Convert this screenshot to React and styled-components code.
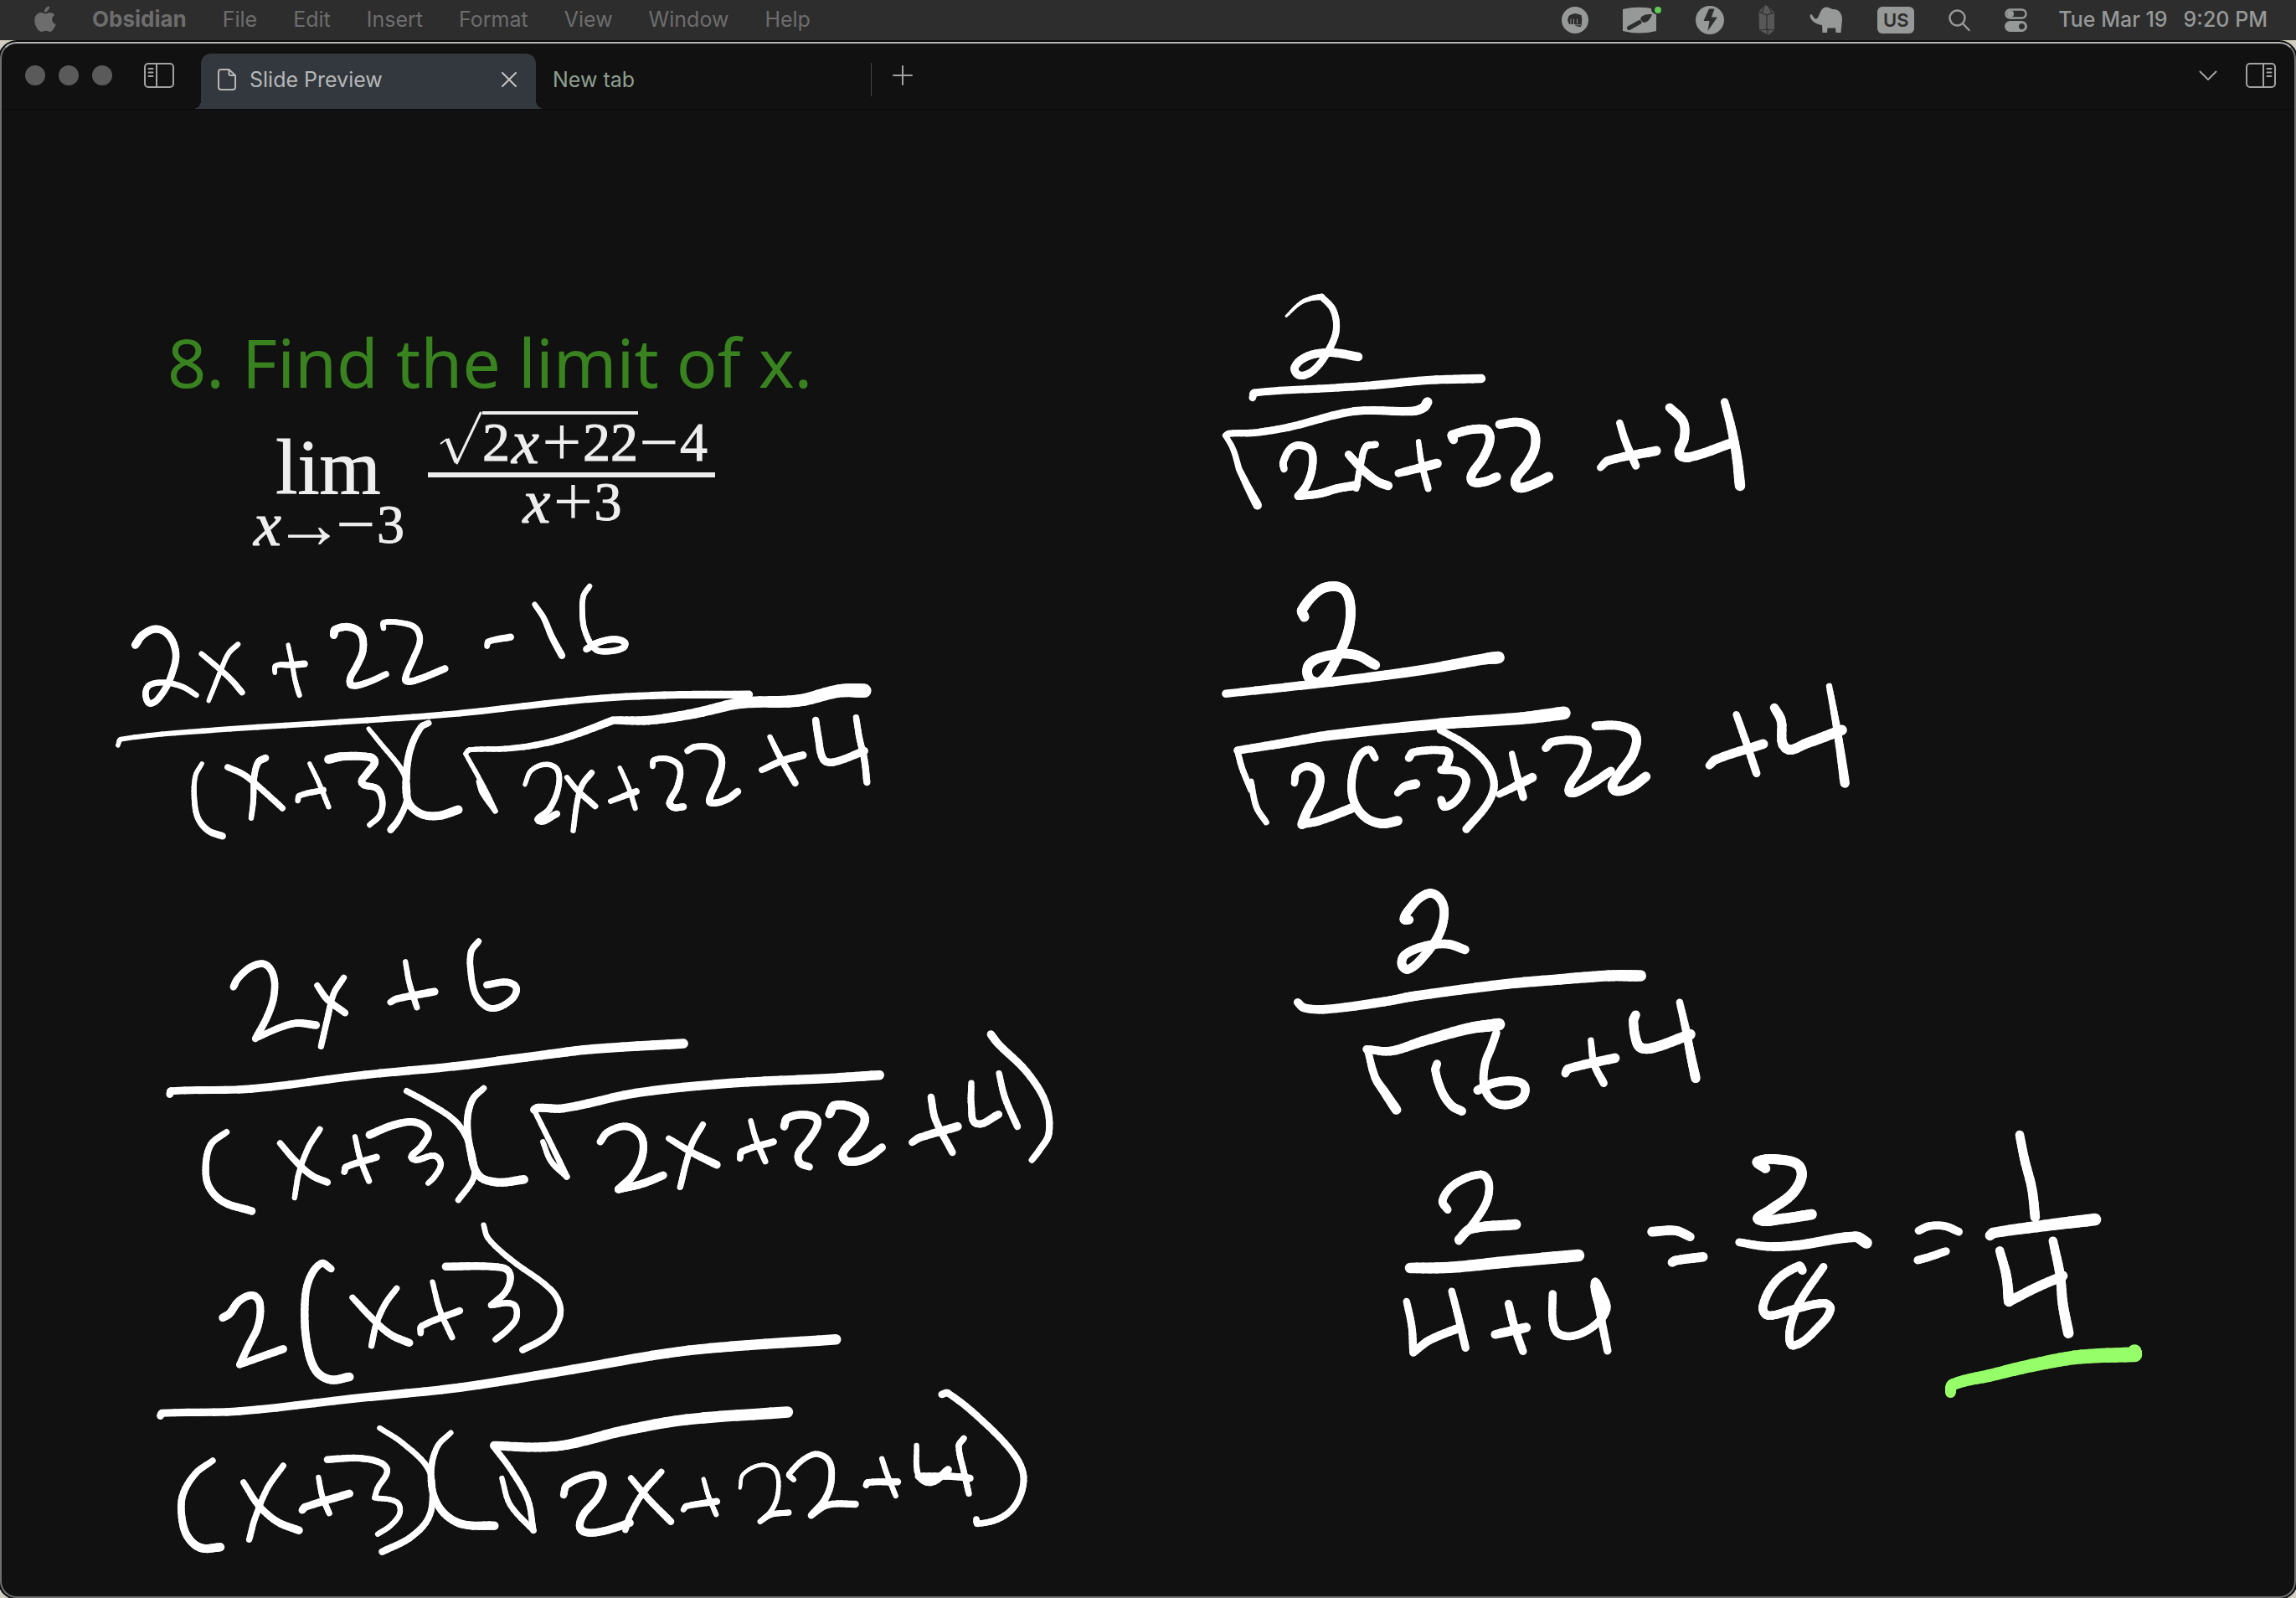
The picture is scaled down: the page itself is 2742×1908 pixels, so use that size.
import React from "react";
import styled, { createGlobalStyle } from "styled-components";

const GlobalStyle = createGlobalStyle`
  * { box-sizing: border-box; }
  body { margin: 0; background: #d2cec2; font-family: Inter, "Liberation Sans", sans-serif; }
  button { font: inherit; color: inherit; background: none; border: 0; padding: 0; margin: 0; }
  svg { display: block; }
`;

const Desktop = styled.div`
  min-height: 100vh;
  display: flex;
  flex-direction: column;
`;

/* ---------- menu bar ---------- */

const MenuBar = styled.header`
  height: 48px;
  flex: none;
  display: flex;
  align-items: center;
  justify-content: space-between;
  padding: 0 34px 0 41px;
  background: #2d2d2d;
  font-size: 25px;
  line-height: 32px;
`;

const Menus = styled.nav`
  display: flex;
  align-items: center;
  gap: 43px;
  color: #6d6d6d;
  padding-bottom: 2px;
`;

const MenuItem = styled.button`
  && {
    font-size: ${(p) => (p.$app ? 26 : 25)}px;
    font-weight: ${(p) => (p.$app ? 700 : 400)};
  }
`;

const Status = styled.div`
  display: flex;
  align-items: center;
  color: #979898;
  gap: 41px;
`;

const StatusItem = styled.button`
  display: flex;
`;

const InputSource = styled.button`
  && {
    width: 44px;
    height: 32px;
    border-radius: 6px;
    background: #979898;
    color: #2d2d2d;
    font-size: 22px;
    line-height: 32px;
    font-weight: 600;
  }
`;

const Clock = styled.time`
  display: flex;
  gap: 19px;
  font-weight: 500;
  padding-bottom: 2px;
  white-space: nowrap;
  margin-left: -4px;
`;

/* ---------- window ---------- */

const Window = styled.main`
  flex: 1;
  display: flex;
  flex-direction: column;
  margin-top: 2px;
  background: #111;
  border: 2px solid #6f7070;
  border-top-color: #b4b4b4;
  border-radius: 20px;
  box-shadow: 0 0 0 2px #0a0a0a;
`;

const TitleBar = styled.div`
  height: 79px;
  flex: none;
  display: flex;
  align-items: stretch;
  border-bottom: 1px solid #0b0b0b;
  padding: 12px 22px 0 28px;
  color: #a2a2a2;
`;

const Lights = styled.div`
  display: flex;
  gap: 16px;
  align-self: flex-start;
  padding-top: 14px;
  margin-right: 38px;
`;

const Light = styled.button`
  && {
    width: 24px;
    height: 24px;
    border-radius: 50%;
    background: #5a5a5a;
  }
`;

const IconButton = styled.button`
  display: flex;
  align-items: center;
  align-self: flex-start;
  height: 52px;
`;

const Tabs = styled.div`
  display: flex;
  margin-left: 32px;
  font-size: 25px;
  line-height: 32px;
`;

const Tab = styled.div`
  position: relative;
  width: 400px;
  display: flex;
  align-items: center;
  padding: 0 23px 4px 20px;
  border-radius: 12px 12px 0 0;
  background: ${(p) => (p.$active ? "#32383e" : "transparent")};
  color: ${(p) => (p.$active ? "#b7b7b7" : "#8f9f91")};

  &::before, &::after {
    content: "";
    display: ${(p) => (p.$active ? "block" : "none")};
    position: absolute;
    bottom: 0;
    width: 10px;
    height: 10px;
  }
  &::before { right: 100%; background: radial-gradient(circle at 0 0, transparent 10px, #32383e 10px); }
  &::after { left: 100%; background: radial-gradient(circle at 100% 0, transparent 10px, #32383e 10px); }
`;

const TabTitle = styled.button`
  flex: 1;
  display: flex;
  align-items: center;
  gap: 16px;
  text-align: left;
`;

const TabDivider = styled.div`
  width: 1px;
  height: 40px;
  margin: 11px 25px 0 0;
  background: #454545;
`;

const Spacer = styled.div`
  flex: 1;
`;

const RightTools = styled.div`
  display: flex;
  gap: 34px;
`;

/* ---------- slide ---------- */

const Slide = styled.section`
  flex: 1;
  position: relative;
  padding: 246px 198px 0;
`;

const Heading = styled.h1`
  margin: 0;
  font-family: "Noto Sans", "Open Sans", sans-serif;
  font-weight: 400;
  font-size: 81px;
  line-height: 110px;
  color: #38831f;
`;

const Formula = styled.div`
  display: flex;
  align-items: flex-start;
  gap: 28px;
  padding-left: 101px;
  color: #eee;
  font-family: "Liberation Serif", serif;
  font-size: 66px;
  line-height: 54px;
  -webkit-text-stroke: 1px #eee;
`;

const Limit = styled.div`
  display: flex;
  flex-direction: column;
  align-items: center;
  gap: 10px;
  padding-top: 38px;
`;

const LimitName = styled.div`
  font-size: 94px;
  line-height: 64px;
`;

const Row = styled.div`
  display: flex;
  justify-content: center;
`;

const Glyph = styled.span`
  width: ${(p) => p.$w}px;
  text-align: center;
  flex: none;
  display: flex;
  justify-content: center;
`;

const Variable = styled(Glyph)`
  font-style: italic;
  font-size: 74px;
`;

const Operator = styled(Glyph)`
  font-size: 84px;
  -webkit-text-stroke: 0;
`;

const Fraction = styled.div`
  padding-top: 4px;
`;

const Numerator = styled.div`
  display: flex;
  align-items: flex-end;
  padding: 0 9px 9px 14px;
  border-bottom: 6px solid #eee;
`;

const Radical = styled.div`
  display: flex;
  align-items: flex-end;
`;

const Radicand = styled(Row)`
  border-top: 4px solid #eee;
  padding-top: 6px;
`;

const Denominator = styled(Row)`
  padding-top: 2px;
`;

const InkLayer = styled.svg`
  position: absolute;
  inset: 0 auto auto 0;
  width: 100%;
  height: auto;
  pointer-events: none;
`;

/* ---------- pen ink ---------- */

/* Each group is one block of handwriting on its own grid; a stroke is
   [start width, end width, "x,y x,y ..."]. */
const INK = [
  {
    x: 120, y: 680, sx: 960 / 1568,
    strokes: [
      [9, 6, "68,270 82,235 108,213 133,235 147,300 140,370 122,440 98,480 88,450 95,415 125,405 160,420 187,450"],
      [6, 7, "197,302 225,345 255,395 276,440"], [6, 5, "268,268 250,300 235,360 222,420 211,470"],
      [5, 8, "340,370 342,345 370,342 398,338"], [5, 6, "366,270 374,340 380,400 388,450"],
      [9, 7, "455,235 458,215 485,206 508,230 512,290 500,345 487,390 490,415 520,405 557,375"],
      [6, 8, "552,210 553,190 590,192 615,210 623,255 610,320 597,375 597,400 625,390 672,355"],
      [6, 8, "754,275 757,258 800,242"],
      [6, 8, "847,125 865,175 880,240 900,308"],
      [6, 8, "954,60 942,95 940,160 945,220 965,285 990,293 1020,280 1022,260 1000,250 970,262 948,285"],
      [5, 9, "34,630 40,608 200,578 520,540 700,515 950,465 1100,450 1265,448"],
      [6, 6, "738,760 745,800 770,865"], [6, 5, "770,865 748,780 712,660"],
      [5, 9, "712,660 720,646 790,642 860,625 920,595 1000,540"],
      [9, 16, "1005,540 1070,540 1160,515 1250,478 1360,470 1440,435 1490,434"],
      [5, 8, "198,695 185,740 183,820 190,890 210,935 238,955"],
      [7, 7, "248,708 280,735 310,780 355,855"], [8, 6, "322,675 308,690 300,740 298,830 294,890"],
      [6, 7, "385,828 388,810 435,790"], [5, 6, "408,695 425,760 445,850"],
      [10, 6, "445,680 470,670 525,672 535,690 520,730 510,765 540,785 550,830 545,880 525,915"],
      [5, 8, "523,570 545,620 585,710 597,760 597,830 580,900 566,932"],
      [7, 10, "640,550 625,565 605,640 597,730 600,830 625,875 660,882 698,860"],
      [5, 8, "828,770 840,720 870,698 892,720 892,790 875,860 855,900 890,875"],
      [6, 7, "910,745 930,790 965,848"], [7, 6, "958,728 940,770 930,830 922,935"],
      [6, 8, "995,830 1045,795"], [5, 6, "1013,710 1030,780 1043,855"],
      [6, 8, "1077,705 1080,682 1110,680 1130,710 1125,780 1110,835 1118,852 1137,850"],
      [7, 8, "1145,650 1160,635 1195,640 1212,680 1205,750 1190,810 1190,835 1220,825 1243,795"],
      [7, 9, "1290,718 1330,685 1370,665"], [6, 8, "1306,600 1325,670 1355,765"],
      [8, 9, "1395,540 1400,600 1410,680 1430,690 1490,650"], [7, 8, "1474,530 1480,600 1490,680 1495,762"],
    ],
  },
  {
    x: 120, y: 1080, sx: 1180 / 1568,
    strokes: [
      [8, 8, "211,295 218,265 240,222 262,215 275,260 275,330 265,400 246,480"], [7, 9, "246,480 280,445 310,425 342,432"],
      [7, 8, "344,290 360,340 388,388"], [7, 7, "386,262 370,320 360,410 350,508"],
      [7, 9, "460,350 470,338 530,312"], [6, 7, "484,205 490,280 502,368"],
      [7, 8, "600,132 588,170 588,250 597,330 620,372 650,345 660,300 645,278 613,288"],
      [8, 11, "110,680 112,668 240,660 420,610 560,580 700,540 780,518 925,498"],
      [7, 9, "200,815 175,860 167,940 172,1010 195,1065 240,1098"],
      [7, 8, "285,855 310,920 335,970 360,995"], [7, 6, "348,805 330,870 315,960 308,1050"],
      [7, 8, "387,958 390,940 438,905"], [6, 7, "404,832 412,910 426,990"],
      [9, 6, "427,825 465,790 500,780 520,815 510,865 495,910 530,900 540,930 530,975 520,998"],
      [7, 7, "486,668 520,710 560,770 580,830 592,920 592,980 568,1058"],
      [7, 10, "608,658 590,700 582,780 587,880 600,970 630,995 672,985"],
      [6, 7, "702,850 715,920 740,975"], [7, 6, "740,975 722,890 688,735"],
      [9, 11, "688,735 695,728 735,730 850,675 1000,640 1160,622 1236,611"],
      [8, 9, "793,850 805,815 835,795 858,830 860,900 845,970 822,1020"], [9, 9, "822,1020 860,1000 893,970"],
      [7, 9, "902,838 940,890 978,932"], [7, 7, "956,788 940,850 930,920 920,1012"],
      [7, 8, "1015,910 1018,885 1068,850"], [6, 7, "1032,775 1040,840 1055,920"],
      [9, 8, "1085,795 1090,765 1120,753 1138,775 1125,840 1108,890 1110,925 1125,940"],
      [10, 9, "1157,750 1165,720 1195,728 1213,765 1200,830 1178,890 1185,920 1215,910 1240,870"],
      [8, 10, "1288,852 1300,835 1360,795"], [8, 8, "1318,690 1325,770 1352,888"],
      [7, 9, "1382,640 1382,720 1390,785 1425,752"], [7, 8, "1426,605 1435,690 1455,795"],
      [9, 7, "1413,465 1425,500 1470,600 1500,710 1505,820 1490,880 1478,915"],
    ],
  },
  {
    x: 120, y: 1440, sx: 1180 / 1568,
    strokes: [
      [9, 8, "194,400 205,385 220,340 242,320 253,350 250,430 235,500 221,568"], [8, 9, "221,568 255,540 290,512"],
      [8, 10, "366,225 350,206 330,270 324,370 328,500 342,590 365,622 395,612"],
      [7, 9, "400,328 430,400 460,460 490,490"], [7, 7, "470,295 452,350 438,420 430,500"],
      [7, 8, "508,455 510,430 570,375"], [6, 7, "527,272 538,370 558,470"],
      [9, 7, "548,217 620,217 648,235 645,300 620,355"], [7, 7, "620,355 655,352 660,400 645,445 627,478"],
      [6, 8, "608,68 615,115 650,190 715,300 730,370 720,440 700,480 670,515"],
      [8, 12, "95,752 98,742 220,735 400,690 570,650 750,585 900,527 1000,503 1167,478"],
      [7, 10, "178,912 150,960 130,1040 130,1130 140,1190 160,1225 190,1222"],
      [7, 9, "227,990 250,1070 280,1130 315,1162"], [7, 7, "290,930 265,1010 245,1120 236,1195"],
      [8, 9, "320,1090 325,1078 395,1030"], [6, 7, "346,972 352,1040 363,1100"],
      [8, 6, "360,908 410,903 445,920 455,950 440,1010 435,1045"], [6, 6, "435,1045 470,1060 475,1100 460,1145 440,1175"],
      [6, 8, "443,795 480,850 520,940 527,1030 520,1120 490,1190 447,1238"],
      [6, 10, "556,812 535,860 525,940 528,1030 545,1100 575,1140 625,1145"],
      [6, 7, "637,975 650,1070 687,1162"], [7, 7, "687,1162 678,1050 650,940 625,865"],
      [10, 13, "625,858 690,864 740,855 830,805 930,765 1090,738"],
      [8, 9, "735,1035 740,1000 775,965 796,975 790,1040 765,1110 763,1160 790,1168 840,1135"],
      [7, 8, "842,975 870,1050 905,1130"], [7, 7, "890,952 860,1030 840,1110 833,1160"],
      [6, 8, "925,1088 930,1075 978,1058"], [5, 6, "957,978 965,1040 977,1105"],
      [4, 6, "1015,1010 1020,960 1050,927 1072,950 1075,1030 1065,1090 1047,1130"], [6, 7, "1047,1130 1065,1105 1092,1098"],
      [6, 8, "1100,980 1093,960 1130,890 1155,910 1160,980 1150,1050 1128,1108"], [7, 8, "1128,1108 1155,1070 1198,1068"],
      [7, 8, "1215,1000 1218,990 1265,988"], [6, 6, "1240,905 1248,960 1262,1038"],
      [6, 9, "1295,858 1298,965 1318,990 1345,945"], [8, 8, "1298,968 1350,968 1380,975"],
      [7, 7, "1370,832 1362,860 1370,950 1378,1030"],
      [8, 7, "1335,675 1345,670 1400,770 1450,890 1465,970 1455,1060 1430,1115 1392,1138 1390,1122"],
    ],
  },
  {
    x: 1420, y: 320, sx: 720 / 1568,
    strokes: [
      [3, 7, "253,172 290,125 320,108 345,103"],
      [7, 10, "345,103 375,150 383,220 365,290 325,365 288,385 275,355 310,315 370,303 440,318"],
      [8, 10, "165,465 170,447 370,430 480,420 620,402 760,396"],
      [10, 7, "178,850 155,790 130,720"], [7, 6, "130,720 115,650 95,600"],
      [7, 11, "95,600 105,593 170,590 260,570 430,513 580,513 610,500 620,480"],
      [8, 9, "247,720 245,695 265,645 290,635 318,655 320,720 305,780 284,817"], [9, 10, "284,817 340,808 385,790 435,778"],
      [9, 10, "415,668 450,720 490,765 518,780"], [8, 7, "485,632 460,640 447,700 435,790"],
      [9, 11, "545,735 645,700"], [6, 8, "597,622 605,700 622,790"],
      [10, 10, "688,615 685,597 768,577 783,610 765,680 735,740 738,766 770,765 800,748"],
      [10, 11, "808,560 860,553 895,580 900,640 880,700 850,755 855,785 885,780 935,748"],
      [8, 11, "1070,715 1090,690 1215,655"], [8, 9, "1120,555 1135,620 1162,708"],
      [10, 11, "1250,500 1285,550 1288,610 1275,665 1300,678 1415,625"], [9, 12, "1393,480 1410,570 1425,680 1433,780"],
    ],
  },
  {
    x: 1420, y: 670, sx: 840 / 1568,
    strokes: [
      [11, 11, "257,200 252,175 290,105 325,90 350,110 360,170 355,250 335,330 295,430 268,420 268,370 310,338 370,335 415,372"],
      [9, 14, "82,475 280,440 520,390 660,350 690,345"],
      [7, 7, "172,935 150,880 138,790"], [7, 7, "138,820 118,740 108,680"],
      [9, 15, "108,678 200,655 310,625 560,583 740,563 836,544"],
      [8, 11, "235,795 240,755 265,735 290,760 288,820 265,890 252,943"], [9, 11, "252,943 290,930 370,880"],
      [8, 11, "415,705 400,675 375,710 362,800 370,870 395,920 430,940 465,930"],
      [8, 11, "465,830 480,808 505,798"],
      [9, 9, "490,705 500,685 560,677 580,690 570,745"], [9, 9, "562,748 605,755 618,790 600,850 570,880 562,855"],
      [8, 9, "560,605 620,660 665,730 680,800 665,870 618,960"],
      [8, 11, "692,835 765,775"], [7, 9, "720,690 730,760 745,845"],
      [9, 10, "795,670 810,647 870,643 888,670 875,740 850,800 850,830 885,810 940,752"],
      [10, 11, "907,590 960,590 995,620 990,690 960,760 945,815 980,815 1018,772"],
      [9, 11, "1160,732 1175,710 1280,655"], [8, 9, "1220,550 1240,640 1265,760"],
      [10, 12, "1305,525 1320,570 1330,670 1380,650 1455,605"], [7, 11, "1427,448 1440,560 1452,680 1462,795"],
    ],
  },
  {
    x: 1500, y: 1040, sx: 600 / 1568,
    strokes: [
      [10, 10, "478,175 462,172 480,135 515,93 550,80 580,110 587,160 570,230 520,310 475,352 455,335 465,300 530,268 600,262 652,282"],
      [9, 13, "130,470 150,490 220,495 400,468 500,447 780,405 950,388 1100,375 1200,375"],
      [11, 8, "438,855 400,790 372,740 350,650"], [9, 14, "345,638 420,645 520,610 660,565 758,549"],
      [9, 10, "565,690 560,715 580,790 610,840 642,860"],
      [9, 10, "750,580 735,630 715,690 712,770 740,825 785,838 830,815 838,770 800,752 740,760 692,785"],
      [9, 11, "965,725 975,708 1120,670"], [7, 9, "1045,607 1055,690 1085,760"],
      [10, 12, "1185,515 1178,535 1185,600 1200,632 1240,633 1355,585"], [8, 11, "1322,470 1340,560 1355,650 1372,742"],
    ],
  },
  {
    x: 1640, y: 1330, sx: 960 / 1568,
    strokes: [
      [9, 9, "145,343 135,310 160,250 210,217 225,245 222,310 200,380 167,455"], [10, 12, "167,450 190,412 278,396"],
      [12, 14, "72,552 150,550 260,530 400,507"],
      [8, 9, "65,672 75,760 78,850"], [9, 10, "78,855 110,810 170,765"], [8, 9, "153,635 165,720 180,838"],
      [10, 11, "238,790 298,765"], [9, 9, "264,680 275,760 292,850"],
      [9, 9, "350,645 350,740 360,785 390,795 430,760 455,700 445,640 432,604 440,690 457,848"],
      [11, 10, "544,422 590,418 618,440"], [10, 11, "583,532 590,525 643,512"],
      [11, 12, "765,195 750,170 800,165 830,185 835,230 815,290 770,350 752,378 800,375 855,360"],
      [9, 13, "714,460 770,475 830,470 940,440 962,462"],
      [10, 9, "837,560 830,545 785,600 760,690 770,722 820,700 880,678 892,700 870,760 820,830 812,780 830,680 878,548"],
      [9, 9, "1064,418 1085,402 1115,402 1142,422"], [9, 9, "1062,524 1080,515 1117,492"],
      [10, 11, "1261,75 1270,160 1285,270 1291,370"],
      [11, 14, "1203,436 1210,426 1310,400 1408,378"],
      [10, 12, "1222,490 1235,580 1240,672"], [11, 11, "1240,672 1290,625 1345,580"], [10, 12, "1326,455 1340,580 1345,680 1356,785"],
    ],
  },
  {
    x: 1640, y: 1330, sx: 960 / 1568, color: "#96fe69",
    strokes: [[12, 17, "1126,998 1130,970 1200,938 1300,895 1380,870 1483,862"], [17, 15, "1485,862 1485,850"]],
  },
];

const SLIDE_TOP = 131;
const SLIDE_LEFT = 2;
const STEPS = 6;
const PRESSURE = 1.06;

const distance = (a, b) => Math.hypot(b[0] - a[0], b[1] - a[1]) || 1;

/* Hermite curve from b to c; tangents follow the neighbours' chord and are
   as long as the segment itself, so short hooks do not overshoot. */
function curve(a, b, c, d, t) {
  const len = distance(b, c);
  const inLen = distance(a, c);
  const outLen = distance(b, d);
  const t2 = t * t;
  const t3 = t2 * t;
  return [0, 1].map((k) => {
    const m0 = ((c[k] - a[k]) / inLen) * len;
    const m1 = ((d[k] - b[k]) / outLen) * len;
    return (2 * t3 - 3 * t2 + 1) * b[k] + (t3 - 2 * t2 + t) * m0 + (3 * t2 - 2 * t3) * c[k] + (t3 - t2) * m1;
  });
}

function Stroke({ group, stroke }) {
  const [from, to, text] = stroke;
  const pts = text.split(" ").map((pair) => {
    const [x, y] = pair.split(",").map(Number);
    return [group.x + x * group.sx, group.y + y / 3];
  });
  const line = [pts[0]];
  for (let i = 0; i < pts.length - 1; i++) {
    const a = pts[Math.max(i - 1, 0)];
    const d = pts[Math.min(i + 2, pts.length - 1)];
    for (let s = 1; s <= STEPS; s++) line.push(curve(a, pts[i], pts[i + 1], d, s / STEPS));
  }
  return line.slice(1).map((p, i) => (
    <line
      key={i}
      x1={line[i][0].toFixed(1)}
      y1={line[i][1].toFixed(1)}
      x2={p[0].toFixed(1)}
      y2={p[1].toFixed(1)}
      strokeWidth={(PRESSURE * (from + ((to - from) * i) / (line.length - 1))).toFixed(1)}
    />
  ));
}

function Ink() {
  return (
    <InkLayer viewBox={`${SLIDE_LEFT} ${SLIDE_TOP} 2738 1775`} strokeLinecap="round" aria-hidden="true">
      {INK.map((group, g) => (
        <g key={g} stroke={group.color || "#fff"}>
          {group.strokes.map((stroke, i) => (
            <Stroke key={i} group={group} stroke={stroke} />
          ))}
        </g>
      ))}
    </InkLayer>
  );
}

/* ---------- icons ---------- */

const AppleIcon = () => (
  <svg width="26" height="32" viewBox="0 0 26 32" fill="currentColor">
    <path d="M18 0.500c.4 3.600-2.600 7-6 7-.5-3.300 2.700-6.600 6-7zM13.200 9.300c1.200 0 3-1.400 5.400-1.400 2.200 0 4.400 1.200 5.700 3-4.600 2.700-4 9.100 1.400 11.200-.8 2.800-4 8.900-7 8.900-2 0-2.700-1.200-5-1.200s-3.200 1.200-5 1.200C4.800 31 .300 24 .300 17.600c0-6.300 4-9.600 7.700-9.600 2.200 0 4 1.300 5.200 1.300z" />
  </svg>
);

const FistIcon = () => (
  <svg width="32" height="32" viewBox="0 0 32 32">
    <circle cx="16" cy="16" r="16" fill="#979898" />
    <path d="M7 16l1.500-5L12 9l4.500-1 7 2 .8 5-.6 7.500-1.200 1.800-6-1.200-.5-2H9z" fill="#2d2d2d" />
    <path d="M11 14.500v6.500M14.500 14.500v6.500M18.500 14.500v5.500M15.500 21.800h7.500" stroke="#979898" strokeWidth="0.900" />
  </svg>
);

const BrushIcon = () => (
  <svg width="46" height="36" viewBox="0 0 46 36">
    <path d="M0 5Q17 1 34 4q-1 5 6 7.500V31Q20 36 0 31V5z" fill="#979898" />
    <path d="M7.500 27.500L20 20.500" stroke="#2d2d2d" strokeWidth="5" strokeLinecap="round" />
    <path d="M21 17c1-5 6-6 14-6-2 5-5 11-11 9.500z" fill="#2d2d2d" />
    <circle cx="42" cy="6" r="4" fill="#5ecb53" />
  </svg>
);

const BoltIcon = () => (
  <svg width="34" height="34" viewBox="0 0 34 34">
    <circle cx="17" cy="17" r="17" fill="#979898" />
    <path d="M16 3.500l6.500 0-3.500 10h7L14.500 30l2-12H9.500z" fill="#2d2d2d" />
  </svg>
);

const CrystalIcon = () => (
  <svg width="20" height="36" viewBox="0 0 20 36">
    <path d="M7 0l5 1.500L19 9v21l-7 6L1 30 .500 8z" fill="#575757" />
    <path d="M.500 8L10 12l9-3M10 12v18M1 30l10-1 8 1M11 30v6M7 0L4 9.500M12 1.500l4 8" stroke="#2d2d2d" strokeWidth="1.200" fill="none" />
  </svg>
);

const ElephantIcon = () => (
  <svg width="40" height="32" viewBox="0 0 40 32" fill="currentColor">
    <path d="M1 9c3-.5 3 5 7 5.500C12 14 12 1 20 .500c4 0 5 2.500 9 2.500 6 0 10 5 10 12l-1.500 16h-6l-.500-5.500H21.500L21 31h-5.500L15 22C7 21-1 15 1 9z" />
  </svg>
);

const SearchIcon = () => (
  <svg width="26" height="27" viewBox="0 0 26 27" fill="none" stroke="currentColor" strokeWidth="2.500" strokeLinecap="round">
    <circle cx="10.500" cy="10.500" r="9" />
    <path d="M17.500 17.500l7 7.500" />
  </svg>
);

const ControlIcon = () => (
  <svg width="27" height="28" viewBox="0 0 27 28">
    <rect x="1.500" y="1.500" width="24" height="10" rx="5" fill="none" stroke="#979898" strokeWidth="2.500" />
    <circle cx="7" cy="6.500" r="4" fill="#979898" />
    <rect x="0" y="15" width="27" height="13" rx="6.500" fill="#979898" />
    <circle cx="20.500" cy="21.500" r="3.500" fill="#2d2d2d" />
  </svg>
);

const SidebarIcon = ({ flip }) => (
  <svg width="36" height="30" viewBox="0 0 36 30" fill="none" stroke="currentColor" strokeWidth="2" strokeLinecap="round">
    <rect x="1" y="1" width="34" height="28" rx="4" />
    <path d={flip ? "M21 1v28M25.500 7h5M25.500 11.500h5M25.500 16h5" : "M15 1v28M5.500 7h5M5.500 11.500h5M5.500 16h5"} />
  </svg>
);

const FileIcon = () => (
  <svg width="22" height="26" viewBox="0 0 22 26" fill="none" stroke="currentColor" strokeWidth="2" strokeLinejoin="round">
    <path d="M13.500 1H4a3 3 0 0 0-3 3v18a3 3 0 0 0 3 3h14a3 3 0 0 0 3-3V8zM13.500 1v5a2 2 0 0 0 2 2H21" />
  </svg>
);

const CloseIcon = () => (
  <svg width="18" height="18" viewBox="0 0 18 18" stroke="#c4c4c4" strokeWidth="2" strokeLinecap="round">
    <path d="M1 1l16 16M17 1L1 17" />
  </svg>
);

const PlusIcon = () => (
  <svg width="24" height="24" viewBox="0 0 24 24" stroke="currentColor" strokeWidth="2" strokeLinecap="round">
    <path d="M12 1v22M1 12h22" />
  </svg>
);

const ChevronIcon = () => (
  <svg width="22" height="13" viewBox="0 0 22 13" fill="none" stroke="currentColor" strokeWidth="2" strokeLinecap="round" strokeLinejoin="round">
    <path d="M1.500 1.500L11 11l9.500-9.500" />
  </svg>
);

const RootSign = () => (
  <svg width="51" height="64" viewBox="0 0 51 64" fill="none" stroke="#eee">
    <path d="M1 39l8-6" strokeWidth="2" />
    <path d="M9 33l11 28" strokeWidth="5" />
    <path d="M20 63L49.500 1" strokeWidth="3" />
  </svg>
);

const MENUS = ["File", "Edit", "Insert", "Format", "View", "Window", "Help"];

const STATUS = [
  ["Fist", FistIcon],
  ["Drawing", BrushIcon],
  ["Power", BoltIcon],
  ["Crystal", CrystalIcon],
  ["Notes", ElephantIcon],
];

const Digit = ({ children }) => <Glyph $w={33}>{children}</Glyph>;
const Plus = () => <Operator $w={50}>+</Operator>;
const Minus = () => <Operator $w={50}>−</Operator>;
const Arrow = () => <Operator $w={62}>→</Operator>;
const X = () => <Variable $w={37}>x</Variable>;

export default function App() {
  return (
    <Desktop>
      <GlobalStyle />
      <MenuBar>
        <Menus>
          <MenuItem aria-label="Apple"><AppleIcon /></MenuItem>
          <MenuItem $app>Obsidian</MenuItem>
          {MENUS.map((name) => (
            <MenuItem key={name}>{name}</MenuItem>
          ))}
        </Menus>
        <Status>
          {STATUS.map(([name, Icon]) => (
            <StatusItem key={name} aria-label={name}><Icon /></StatusItem>
          ))}
          <InputSource>US</InputSource>
          <StatusItem aria-label="Search"><SearchIcon /></StatusItem>
          <StatusItem aria-label="Control Center"><ControlIcon /></StatusItem>
          <Clock><span>Tue Mar 19</span><span>9:20 PM</span></Clock>
        </Status>
      </MenuBar>

      <Window>
        <TitleBar>
          <Lights>
            <Light aria-label="Close window" />
            <Light aria-label="Minimise window" />
            <Light aria-label="Zoom window" />
          </Lights>
          <IconButton aria-label="Toggle left sidebar"><SidebarIcon /></IconButton>
          <Tabs>
            <Tab $active>
              <TabTitle><FileIcon />Slide Preview</TabTitle>
              <button aria-label="Close tab"><CloseIcon /></button>
            </Tab>
            <Tab>
              <TabTitle>New tab</TabTitle>
            </Tab>
          </Tabs>
          <TabDivider />
          <IconButton aria-label="New tab"><PlusIcon /></IconButton>
          <Spacer />
          <RightTools>
            <IconButton aria-label="Tab list"><ChevronIcon /></IconButton>
            <IconButton aria-label="Toggle right sidebar"><SidebarIcon flip /></IconButton>
          </RightTools>
        </TitleBar>

        <Slide>
          <Heading>8. Find the limit of x.</Heading>
          <Formula>
            <Limit>
              <LimitName>lim</LimitName>
              <Row>
                <X /><Arrow /><Minus /><Digit>3</Digit>
              </Row>
            </Limit>
            <Fraction>
              <Numerator>
                <Radical>
                  <RootSign />
                  <Radicand>
                    <Digit>2</Digit><X /><Plus /><Digit>2</Digit><Digit>2</Digit>
                  </Radicand>
                </Radical>
                <Minus /><Digit>4</Digit>
              </Numerator>
              <Denominator>
                <X /><Plus /><Digit>3</Digit>
              </Denominator>
            </Fraction>
          </Formula>
          <Ink />
        </Slide>
      </Window>
    </Desktop>
  );
}
